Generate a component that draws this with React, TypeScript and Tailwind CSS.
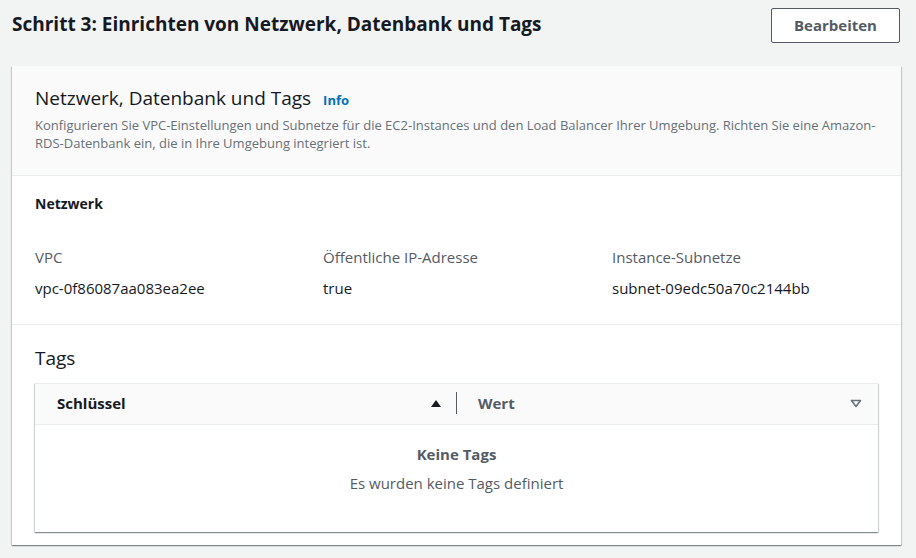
import React from "react";

const FONT = { fontFamily: "'Open Sans', 'Noto Sans', sans-serif" };

function Field({ label, value }: { label: string; value: string }) {
  return (
    <div className="flex flex-col gap-[11px]">
      <span className="text-[15px] leading-[20px] text-[#545b64]">{label}</span>
      <span className="text-[15px] leading-[20px] text-[#16191f]">{value}</span>
    </div>
  );
}

export default function App() {
  return (
    <div className="min-h-[558px] w-[916px] bg-[#f2f3f3] text-[#16191f]" style={FONT}>
      {/* Page header */}
      <div className="flex items-start justify-between pl-[12px] pr-[16px] pt-[8px]">
        <h2 className="pt-[3px] text-[19px] font-bold leading-[26px]">
          Schritt 3: Einrichten von Netzwerk, Datenbank und Tags
        </h2>
        <button className="h-[35px] w-[129px] rounded-[2px] border border-[#545b64] bg-white text-[15px] font-bold text-[#545b64]">
          Bearbeiten
        </button>
      </div>

      {/* Card */}
      <div className="ml-[12px] mr-[15px] mt-[23px] bg-white shadow-[0_1px_1px_0_rgba(0,28,36,0.3),1px_1px_1px_0_rgba(0,28,36,0.15),-1px_1px_1px_0_rgba(0,28,36,0.15)]">
        <div className="border-b border-[#eaeded] bg-[#fafafa] px-[23px] pb-[23px] pt-[19px]">
          <div className="flex items-baseline gap-[12px]">
            <span className="text-[19px] leading-[26px]">Netzwerk, Datenbank und Tags</span>
            <a className="text-[13px] font-bold text-[#0073bb]">Info</a>
          </div>
          <p className="mt-[5px] max-w-[850px] text-[13px] leading-[18px] text-[#687078]">
            Konfigurieren Sie VPC-Einstellungen und Subnetze für die EC2-Instances und den Load Balancer Ihrer Umgebung. Richten Sie eine Amazon-
            <br />
            RDS-Datenbank ein, die in Ihre Umgebung integriert ist.
          </p>
        </div>

        <div className="border-b border-[#eaeded] px-[23px] pb-[26px] pt-[18px]">
          <div className="text-[14px] font-bold leading-[20px]">Netzwerk</div>
          <div className="mt-[33px] grid grid-cols-[288px_289px_1fr]">
            <Field label="VPC" value="vpc-0f86087aa083ea2ee" />
            <Field label="Öffentliche IP-Adresse" value="true" />
            <Field label="Instance-Subnetze" value="subnet-09edc50a70c2144bb" />
          </div>
        </div>

        <div className="px-[23px] pb-[13px] pt-[20px]">
          <div className="text-[19px] leading-[26px]">Tags</div>
          <div className="mt-[12px] border-t border-[#eaeded] bg-white shadow-[0_1px_1px_0_rgba(0,28,36,0.3),1px_1px_1px_0_rgba(0,28,36,0.15),-1px_1px_1px_0_rgba(0,28,36,0.15)]">
            <div className="flex h-[41px] items-center border-b border-[#eaeded] bg-[#fafafa] pb-[2px]">
              <div className="flex flex-1 items-center justify-between pl-[22px] pr-[14px]">
                <span className="text-[15px] font-bold">Schlüssel</span>
                <svg width="12" height="9" viewBox="0 0 12 9">
                  <path d="M1 8 L6 1 L11 8 Z" fill="#16191f" />
                </svg>
              </div>
              <div className="h-[22px] w-px bg-[#545b64]" />
              <div className="flex w-[421px] items-center justify-between pl-[21px] pr-[16px]">
                <span className="text-[15px] font-bold text-[#545b64]">Wert</span>
                <svg width="12" height="9" viewBox="0 0 12 9">
                  <path d="M1.5 1.5 L10.5 1.5 L6 7.5 Z" fill="none" stroke="#687078" strokeWidth="1.6" strokeLinejoin="round" />
                </svg>
              </div>
            </div>
            <div className="flex h-[107px] flex-col items-center pt-[18px]">
              <span className="text-[15px] font-bold leading-[22px] text-[#545b64]">Keine Tags</span>
              <span className="mt-[7px] text-[15px] leading-[22px] text-[#545b64]">Es wurden keine Tags definiert</span>
            </div>
          </div>
        </div>
      </div>
    </div>
  );
}
